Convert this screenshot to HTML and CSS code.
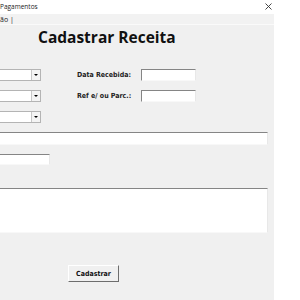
FILE: index.html
```html
<!DOCTYPE html>
<html lang="pt">
<head>
    <meta charset="UTF-8">
    <meta name="viewport" content="width=device-width, initial-scale=1.0">
    <title>Pagamentos</title>
    <link rel="stylesheet" href="styles.css">
</head>
<body>
    <div class="window">
        <div class="titlebar">
            <span class="title">Pagamentos</span>
            <svg class="close" width="7" height="7" viewBox="0 0 7 7">
                <path d="M0.5 0.5 L6.5 6.5 M6.5 0.5 L0.5 6.5" stroke="#333" stroke-width="0.9" fill="none"/>
            </svg>
        </div>
        <div class="main">
            <div class="form">
                <div class="menu">ão |</div>
                <div class="content">
                    <h1>Cadastrar Receita</h1>
                    <div class="fields">
                        <div class="combo"><span class="drop"><span class="arrow"></span></span></div>
                        <label>Data Recebida:</label>
                        <div class="textbox"></div>

                        <div class="combo"><span class="drop"><span class="arrow"></span></span></div>
                        <label>Ref e/ ou Parc.:</label>
                        <div class="textbox"></div>

                        <div class="combo"><span class="drop"><span class="arrow"></span></span></div>
                    </div>
                    <div class="textbox wide"></div>
                    <div class="textbox small"></div>
                    <div class="textbox area"></div>
                    <button class="btn">Cadastrar</button>
                </div>
            </div>
            <div class="side"></div>
        </div>
    </div>
</body>
</html>
```

FILE: styles.css
```css
body {
    margin: 0;
    padding: 0;
    background-color: #fff;
    font-family: "Liberation Sans", Arial, sans-serif;
    overflow: hidden;
}
.window {
    width: 300px;
    height: 300px;
}
.titlebar {
    height: 14px;
    background-color: #fff;
    display: flex;
    align-items: center;
    justify-content: space-between;
    padding-right: 28px;
}
.title {
    font-family: "Open Sans", sans-serif;
    font-size: 6.5px;
    color: #222;
    margin-top: -1px;
}
.close { display: block; margin-top: -2px; }
.main {
    display: flex;
    height: 286px;
}
.form {
    width: 274px;
    background-color: #f0f0f0;
    overflow: hidden;
}
.side { flex: 1; background-color: #fff; }
.menu {
    height: 10px;
    font-family: "Open Sans", sans-serif;
    font-size: 7px;
    line-height: 11px;
    color: #222;
    border-bottom: 1px solid #fafafa;
    background-color: #f2f2f2;
}
.content {
    margin-left: -10px;
}
h1 {
    margin: 3px 0 0 48px;
    font-family: "Open Sans", sans-serif;
    font-size: 15.5px;
    line-height: 19px;
    font-weight: bold;
    color: #111;
}
.fields {
    margin-top: 22px;
    display: grid;
    grid-template-columns: 51px 100px 55px;
    grid-auto-rows: 12px;
    row-gap: 9px;
    align-items: center;
}
.fields label {
    padding-left: 36px;
    font-family: "DejaVu Sans Condensed", "DejaVu Sans", sans-serif;
    font-size: 7px;
    font-weight: bold;
    color: #222;
}
.combo {
    height: 12px;
    box-sizing: border-box;
    background-color: #fff;
    border: 1px solid #b4b4b4;
    display: flex;
    justify-content: flex-end;
}
.drop {
    width: 8px;
    background-color: #f4f4f4;
    border-left: 1px solid #c8c8c8;
    display: flex;
    align-items: center;
    justify-content: center;
}
.arrow {
    width: 0;
    height: 0;
    border-left: 2px solid transparent;
    border-right: 2px solid transparent;
    border-top: 2px solid #000;
}
.textbox {
    height: 12px;
    box-sizing: border-box;
    background-color: #fff;
    border-top: 1px solid #858585;
    border-left: 1px solid #858585;
    border-right: 1px solid #e8e8e8;
    border-bottom: 1px solid #f8f8f8;
}
.textbox.wide {
    width: 278px;
    height: 13px;
    margin-top: 9px;
}
.textbox.small {
    width: 60px;
    height: 11px;
    margin-top: 9px;
}
.textbox.area {
    width: 278px;
    height: 45px;
    margin-top: 23px;
}
.btn {
    display: block;
    margin: 32px 0 0 78px;
    width: 51px;
    height: 17px;
    padding: 0;
    background-color: #f0f0f0;
    border-top: 1px solid #fff;
    border-left: 1px solid #fff;
    border-right: 1px solid #6d6d6d;
    border-bottom: 1px solid #6d6d6d;
    font-family: "DejaVu Sans Condensed", "DejaVu Sans", sans-serif;
    font-size: 7px;
    font-weight: bold;
    color: #111;
}
```
